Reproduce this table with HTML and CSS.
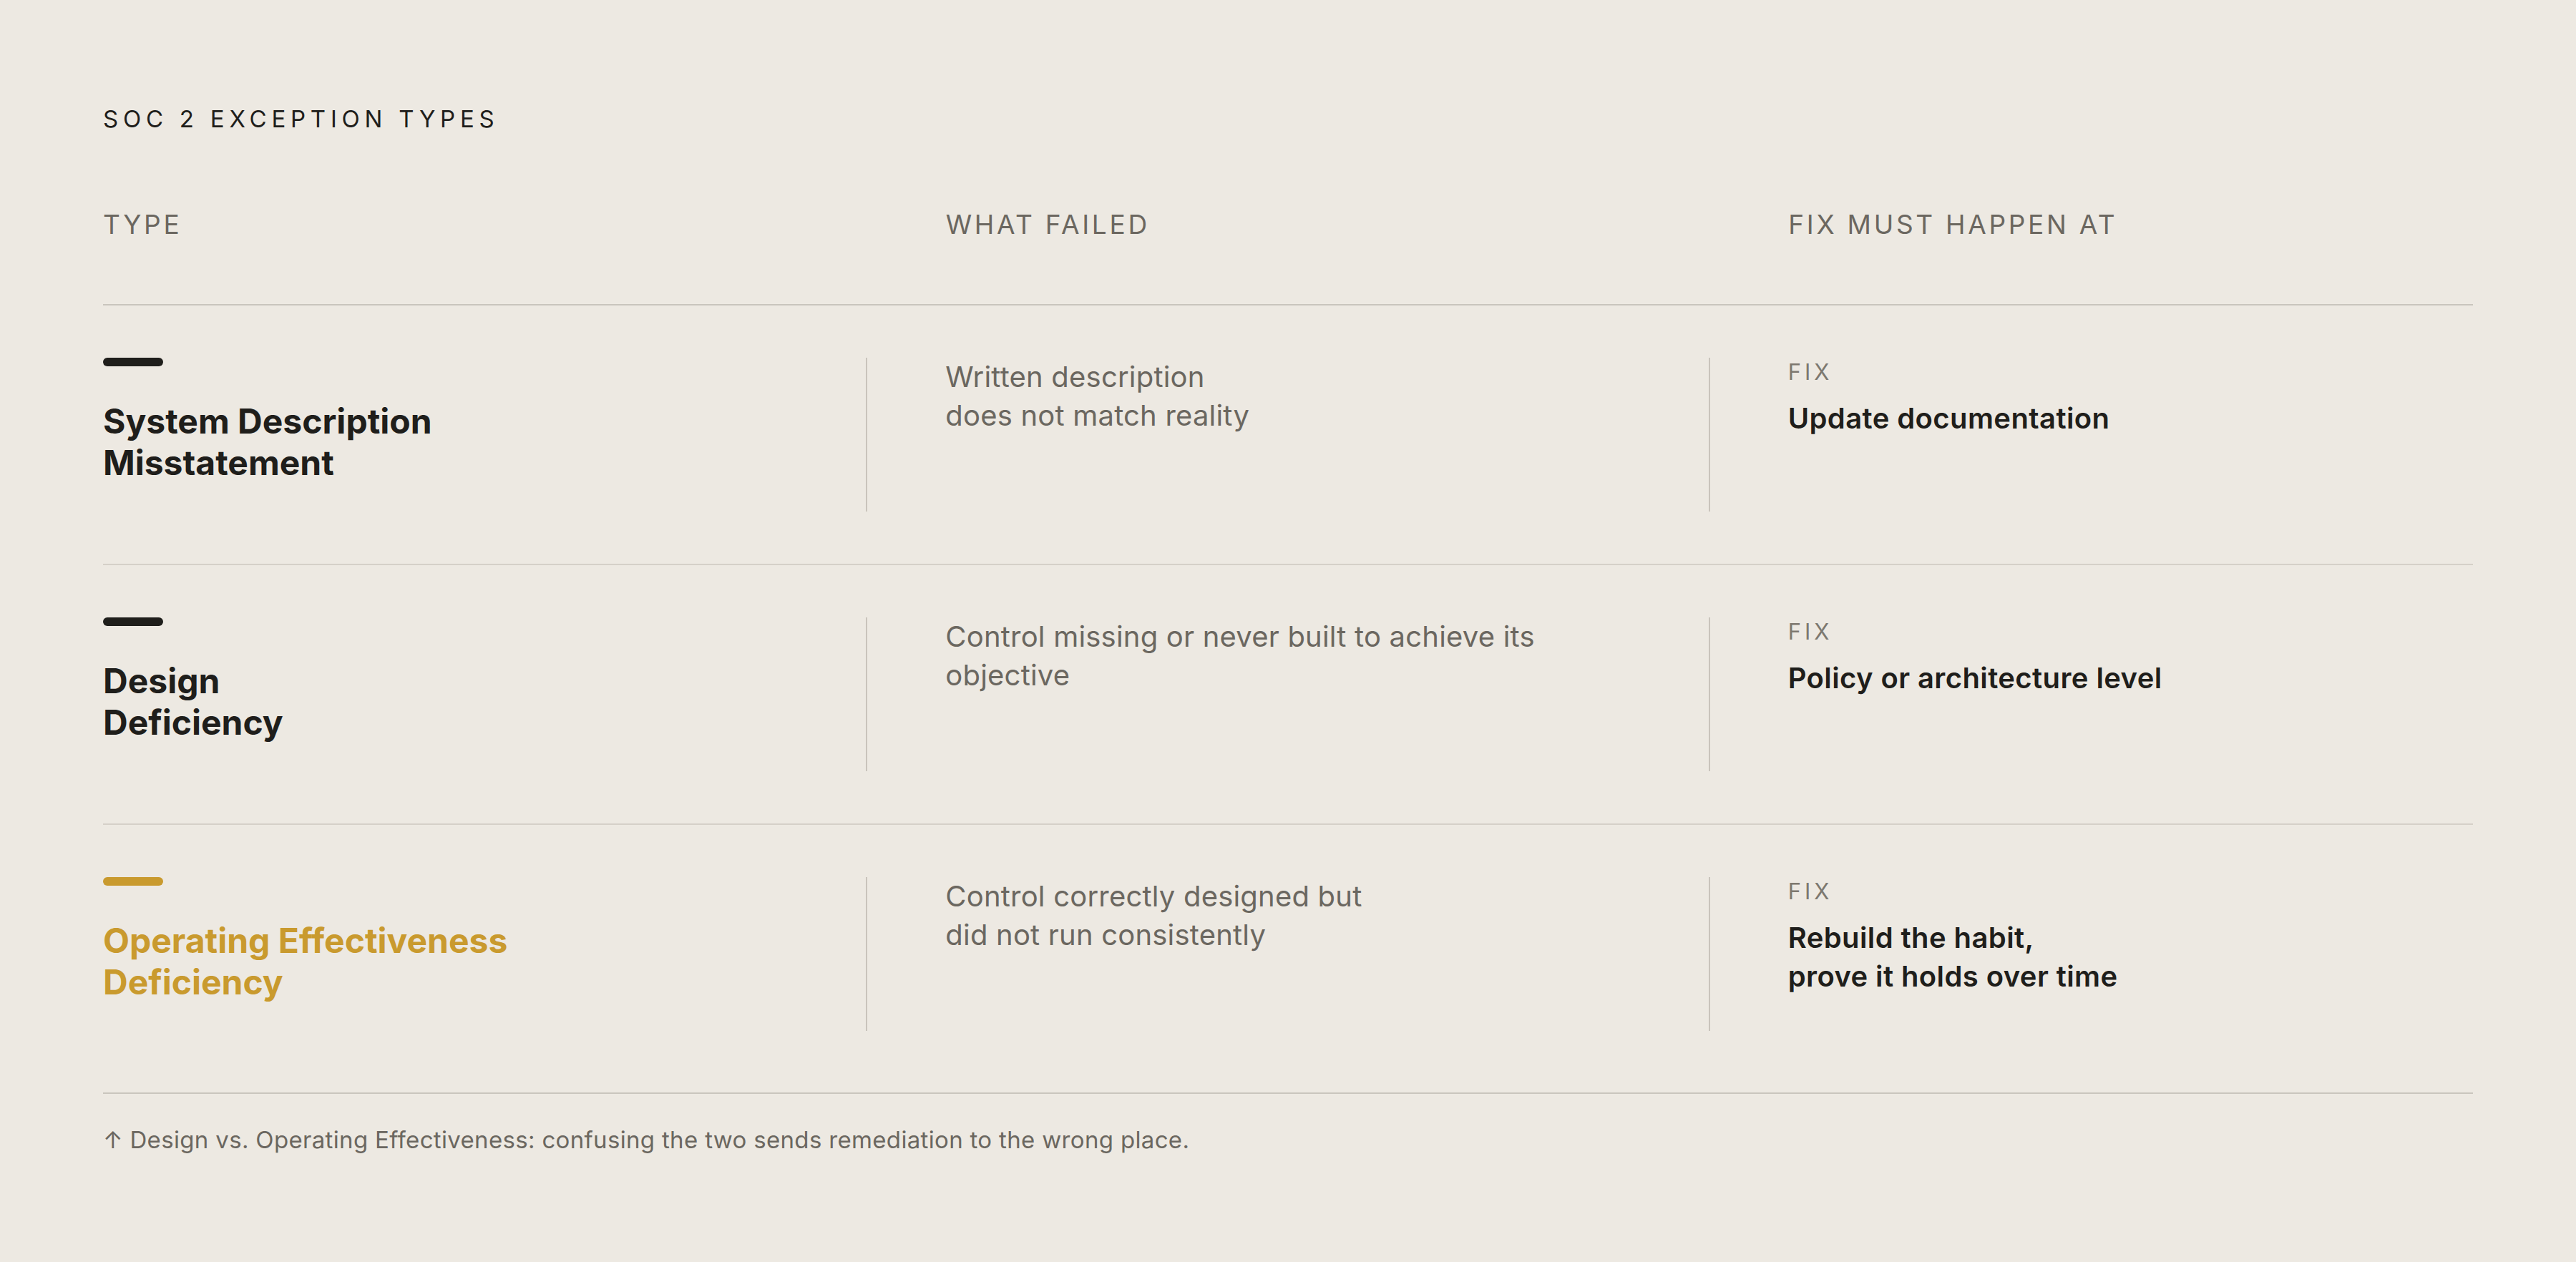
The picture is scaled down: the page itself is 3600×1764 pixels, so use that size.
FILE: index.html
```html
<!DOCTYPE html>
<html lang="en">
  <head>
    <meta charset="UTF-8" />
    <meta name="viewport" content="width=device-width, initial-scale=1.0" />
    <title>SOC 2 Exception Types</title>
    <link rel="stylesheet" href="styles.css">
  </head>
  <body>
    <main class="page">
      <h2 class="eyebrow">SOC 2 EXCEPTION TYPES</h2>

      <div class="table">
        <div class="thead">
          <span>TYPE</span>
          <span>WHAT FAILED</span>
          <span>FIX MUST HAPPEN AT</span>
        </div>

        <div class="row">
          <div class="type">
            <span class="dash"></span>
            <h3 class="type-name">System Description<br />Misstatement</h3>
          </div>
          <span class="divider"></span>
          <p class="failed">Written description<br />does not match reality</p>
          <span class="divider"></span>
          <div class="fix">
            <span class="fix-label">FIX</span>
            <p class="fix-text">Update documentation</p>
          </div>
        </div>

        <div class="row">
          <div class="type">
            <span class="dash"></span>
            <h3 class="type-name">Design<br />Deficiency</h3>
          </div>
          <span class="divider"></span>
          <p class="failed">Control missing or never built to achieve its<br />objective</p>
          <span class="divider"></span>
          <div class="fix">
            <span class="fix-label">FIX</span>
            <p class="fix-text">Policy or architecture level</p>
          </div>
        </div>

        <div class="row last">
          <div class="type gold">
            <span class="dash"></span>
            <h3 class="type-name">Operating Effectiveness<br />Deficiency</h3>
          </div>
          <span class="divider"></span>
          <p class="failed">Control correctly designed but<br />did not run consistently</p>
          <span class="divider"></span>
          <div class="fix">
            <span class="fix-label">FIX</span>
            <p class="fix-text">Rebuild the habit,<br />prove it holds over time</p>
          </div>
        </div>
      </div>

      <p class="note">↑ Design vs. Operating Effectiveness: confusing the two sends remediation to the wrong place.</p>
    </main>
  </body>
</html>
```

FILE: styles.css
```css
* {
  margin: 0;
  padding: 0;
  box-sizing: border-box;
}

body {
  background-color: #ede9e2;
  font-family: Inter, "Noto Sans", sans-serif;
  color: #1f1e1b;
}

.page {
  padding: 150px 144px 0 144px;
}

.eyebrow {
  font-size: 33px;
  font-weight: 400;
  line-height: 1;
  letter-spacing: 0.205em;
  color: #1f1e1b;
}

.thead {
  display: grid;
  grid-template-columns: 1fr 1fr 1fr;
  column-gap: 221px;
  margin-top: 112px;
  padding-bottom: 93px;
  border-bottom: 2px solid #c9c5bd;
  font-size: 37px;
  line-height: 1;
  letter-spacing: 0.1em;
  color: #6b6760;
}

.row {
  display: grid;
  grid-template-columns: 1fr 2px 1fr 2px 1fr;
  grid-template-rows: minmax(215px, auto);
  column-gap: 109px;
  padding: 73px 0;
  border-bottom: 2px solid #d5d0c8;
}

.row.last {
  padding-bottom: 86px;
  border-bottom: 2px solid #c9c5bd;
}

.divider {
  background-color: #c9c4bc;
}

.dash {
  display: block;
  width: 84px;
  height: 12px;
  border-radius: 6px;
  background-color: #1f1e1b;
}

.type-name {
  margin-top: 48px;
  font-size: 48px;
  font-weight: 700;
  line-height: 58px;
}

.gold .dash {
  background-color: #c99a2e;
}

.gold .type-name {
  color: #c99a2e;
}

.failed {
  font-size: 40px;
  line-height: 54px;
  letter-spacing: 0.005em;
  color: #6b6760;
}

.fix-label {
  display: block;
  font-size: 31px;
  line-height: 40px;
  letter-spacing: 0.16em;
  color: #7d786f;
}

.fix-text {
  margin-top: 18px;
  font-size: 40px;
  font-weight: 600;
  line-height: 54px;
  letter-spacing: 0.01em;
  color: #1f1e1b;
}

.note {
  margin-top: 44px;
  font-size: 33px;
  line-height: 40px;
  letter-spacing: 0.01em;
  color: #6b6760;
}
```
